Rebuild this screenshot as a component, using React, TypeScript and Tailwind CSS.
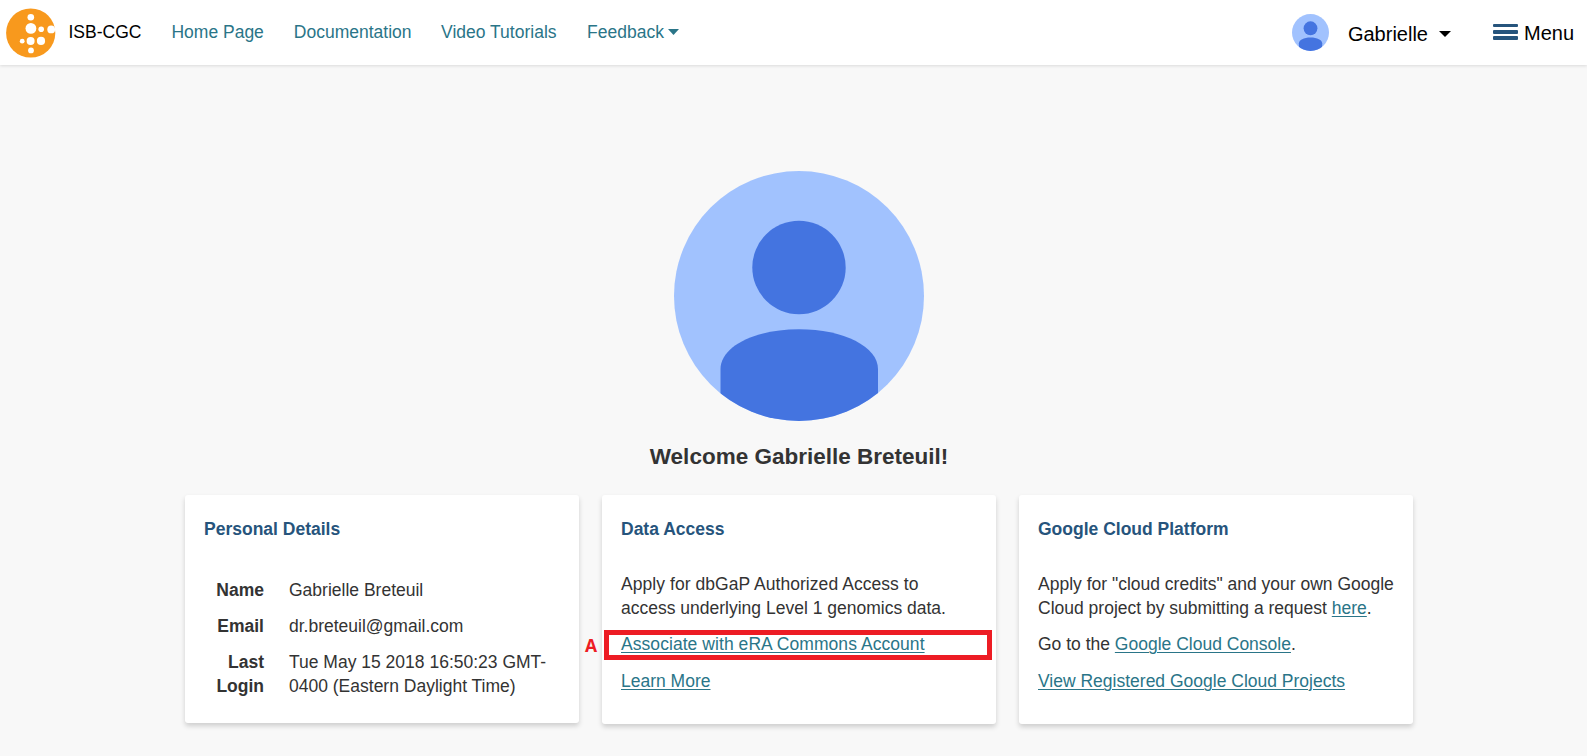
import React from 'react';

function Avatar({ className }: { className: string }) {
  return (
    <svg viewBox="0 0 250 250" className={className} aria-hidden="true">
      <defs>
        <clipPath id="avatar-clip">
          <circle cx="125" cy="125" r="125" />
        </clipPath>
      </defs>
      <circle cx="125" cy="125" r="125" fill="#a1c2fe" />
      <g clipPath="url(#avatar-clip)" fill="#4474e0">
        <circle cx="125" cy="96.5" r="46.7" />
        <path d="M46.5 250V198C46.5 176 80 158.3 125 158.3S204 176 204 198V250Z" />
      </g>
    </svg>
  );
}

function Logo() {
  return (
    <svg viewBox="0 0 50 50" className="size-[50px] shrink-0" aria-hidden="true">
      <circle cx="24.7" cy="25" r="24.6" fill="#f8991d" />
      <g fill="#fff">
        <circle cx="24.8" cy="9.2" r="3.3" />
        <circle cx="24.9" cy="20.4" r="5.4" />
        <circle cx="35.2" cy="21.2" r="2.8" />
        <circle cx="45.2" cy="21.4" r="3.9" />
        <circle cx="16.2" cy="33.2" r="2.4" />
        <circle cx="24.6" cy="32.9" r="4" />
        <circle cx="35" cy="32.9" r="4.1" />
        <circle cx="25" cy="42.4" r="2.9" />
      </g>
    </svg>
  );
}

function Caret({ className }: { className: string }) {
  return (
    <svg viewBox="0 0 12 6" preserveAspectRatio="none" className={className} aria-hidden="true">
      <path d="M0 0H12L6 6Z" fill="currentColor" />
    </svg>
  );
}

function Link({ children }: { children: React.ReactNode }) {
  return (
    <a href="#" className="text-[#2a7588] underline decoration-1 underline-offset-2">
      {children}
    </a>
  );
}

function Card({ title, className, children }: { title: string; className: string; children: React.ReactNode }) {
  return (
    <section className={`w-[394px] rounded-[3px] bg-white px-[19px] pt-[22px] shadow-[0_3px_5px_rgba(0,0,0,0.17)] ${className}`}>
      <h2 className="font-bold text-[#26547c]">{title}</h2>
      {children}
    </section>
  );
}

function Detail({ label, children }: { label: string; children: React.ReactNode }) {
  return (
    <div className="flex gap-[25px]">
      <dt className="w-[60px] shrink-0 text-right font-bold">{label}</dt>
      <dd>{children}</dd>
    </div>
  );
}

export default function App() {
  return (
    <div className="h-[756px] overflow-hidden bg-[#f8f8f8] font-['Liberation_Sans',Arial,sans-serif] text-[17.5px] leading-[24px] text-[#333]">
      <header className="flex h-[65px] bg-white pl-[6px] pr-[13px] shadow-[0_1px_3px_rgba(0,0,0,0.12)]">
        <div className="flex pt-2">
          <Logo />
        </div>
        <nav className="ml-[12.5px] flex items-start gap-[30px] pt-[20px] whitespace-nowrap text-[#2a7588]">
          <a href="#" className="text-black">ISB-CGC</a>
          <a href="#">Home Page</a>
          <a href="#">Documentation</a>
          <a href="#" className="-ml-[0.5px]">Video Tutorials</a>
          <a href="#" className="ml-[0.5px] flex items-center gap-[4.5px]">
            Feedback
            <Caret className="h-[6px] w-[11px]" />
          </a>
        </nav>
        <div className="ml-auto flex text-[20px] text-black">
          <Avatar className="mt-[14px] size-[37px]" />
          <button className="mt-[22px] ml-[19px] flex h-6 items-center gap-[11px]">
            Gabrielle
            <Caret className="h-[6px] w-[12px]" />
          </button>
          <button className="mt-[21px] ml-[42px] flex h-6 items-center gap-[6px]">
            <span className="mb-[2px] flex w-[25px] flex-col">
              <span className="h-[3px] rounded-[1px] bg-[#26547c]" />
              <span className="mt-[3px] h-[4px] rounded-[1px] bg-[#26547c]" />
              <span className="mt-[2px] h-[4px] rounded-[1px] bg-[#26547c]" />
            </span>
            Menu
          </button>
        </div>
      </header>
      <main>
        <div className="flex flex-col items-center pt-[106px] pl-[11px]">
          <Avatar className="size-[250px]" />
          <h1 className="mt-[24px] text-[22.5px] font-bold whitespace-nowrap">Welcome Gabrielle Breteuil!</h1>
        </div>
        <div className="mt-[26px] flex items-start gap-[23px] pl-[185px]">
          <Card title="Personal Details" className="h-[228px]">
            <dl className="mt-[37px] flex flex-col gap-3">
              <Detail label="Name">Gabrielle Breteuil</Detail>
              <Detail label="Email">dr.breteuil@gmail.com</Detail>
              <Detail label="Last Login">
                Tue May 15 2018 16:50:23 GMT-
                <br />
                0400 (Eastern Daylight Time)
              </Detail>
            </dl>
          </Card>
          <Card title="Data Access" className="relative h-[229px]">
            <div className="mt-[31px] whitespace-nowrap">
              <p>
                <span className="tracking-[0.06px]">Apply for dbGaP Authorized Access to</span>
                <br />
                access underlying Level 1 genomics data.
              </p>
              <p className="mt-3 tracking-[0.06px]">
                <Link>Associate with eRA Commons Account</Link>
              </p>
              <p className="mt-[13px]">
                <Link>Learn More</Link>
              </p>
            </div>
            <div className="absolute top-[135px] left-[2px] h-[30px] w-[388px] border-[5px] border-[#ed1c24]" />
            <span className="absolute top-[138px] -left-[17px] font-['Open_Sans',sans-serif] text-[17.5px] font-bold text-[#ed1c24]">
              A
            </span>
          </Card>
          <Card title="Google Cloud Platform" className="h-[229px]">
            <div className="mt-[31px] whitespace-nowrap">
              <p>
                Apply for "cloud credits" and your own Google
                <br />
                Cloud project by submitting a request <Link>here</Link>.
              </p>
              <p className="mt-3">
                Go to the <Link>Google Cloud Console</Link>.
              </p>
              <p className="mt-[13px]">
                <Link>View Registered Google Cloud Projects</Link>
              </p>
            </div>
          </Card>
        </div>
      </main>
    </div>
  );
}
